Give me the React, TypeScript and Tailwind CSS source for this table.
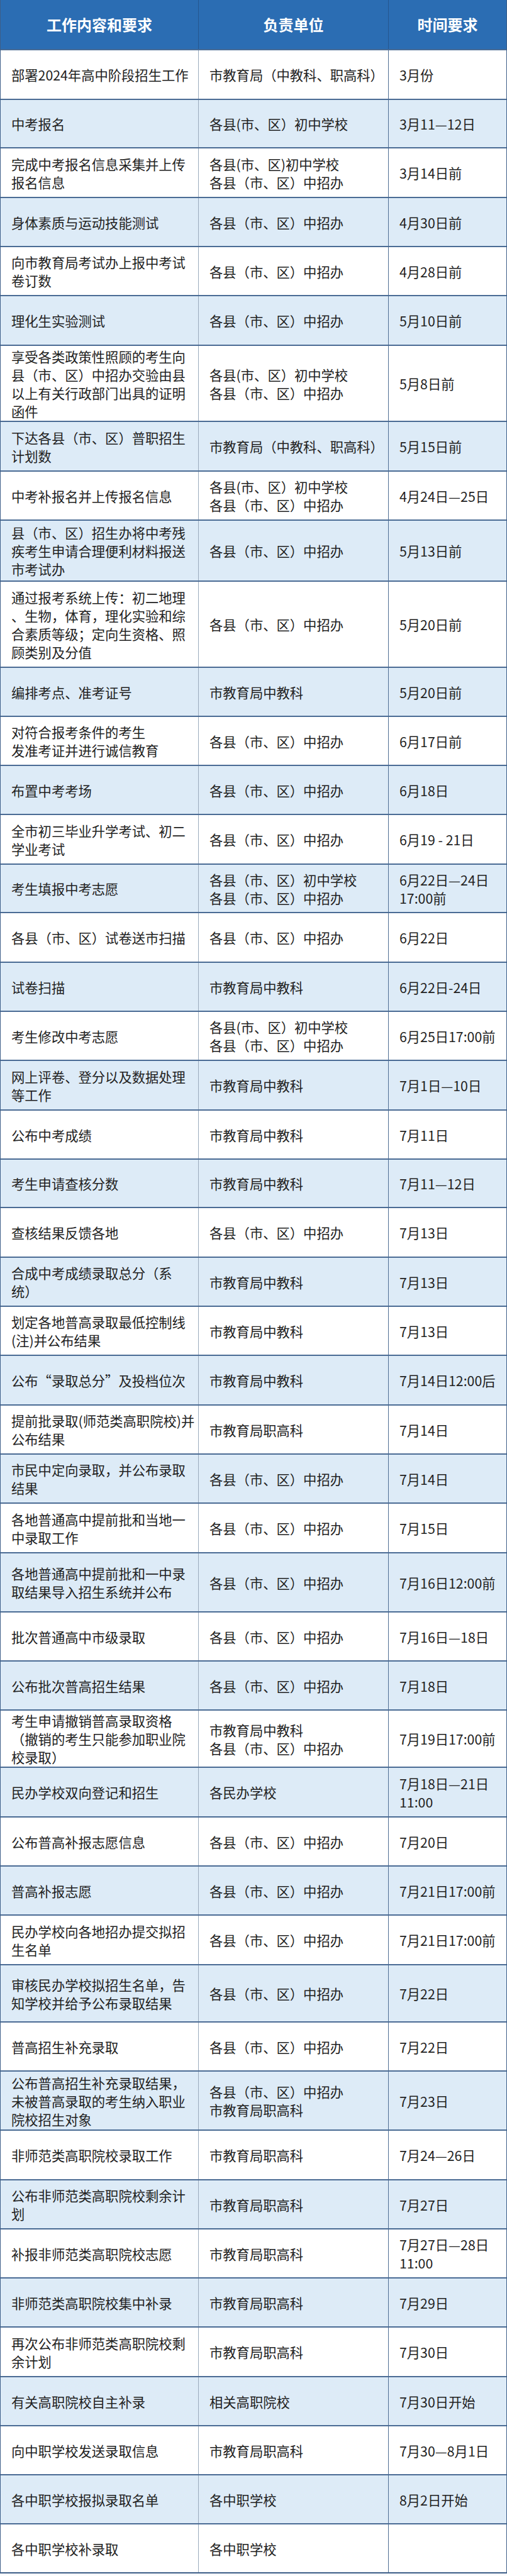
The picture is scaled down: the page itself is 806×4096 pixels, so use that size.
type Row = {
  task: string[];
  unit: string[];
  time: string[];
  h: string;
};

const A = "各县（市、区）中招办";
const B = "各县(市、区）初中学校";
const ZJ = "市教育局中教科";
const ZG = "市教育局职高科";
const BOTH = "市教育局（中教科、职高科）";

const rows: Row[] = [
  { task: ["部署2024年高中阶段招生工作"], unit: [BOTH], time: ["3月份"], h: "h-[79px]" },
  { task: ["中考报名"], unit: [B], time: ["3月11—12日"], h: "h-[77px]" },
  { task: ["完成中考报名信息采集并上传", "报名信息"], unit: ["各县(市、区)初中学校", A], time: ["3月14日前"], h: "h-[79px]" },
  { task: ["身体素质与运动技能测试"], unit: [A], time: ["4月30日前"], h: "h-[78px]" },
  { task: ["向市教育局考试办上报中考试", "卷订数"], unit: [A], time: ["4月28日前"], h: "h-[78px]" },
  { task: ["理化生实验测试"], unit: [A], time: ["5月10日前"], h: "h-[79px]" },
  {
    task: ["享受各类政策性照顾的考生向", "县（市、区）中招办交验由县", "以上有关行政部门出具的证明", "函件"],
    unit: [B, A],
    time: ["5月8日前"],
    h: "h-[121px]",
  },
  { task: ["下达各县（市、区）普职招生", "计划数"], unit: [BOTH], time: ["5月15日前"], h: "h-[79px]" },
  { task: ["中考补报名并上传报名信息"], unit: [B, A], time: ["4月24日—25日"], h: "h-[78px]" },
  {
    task: ["县（市、区）招生办将中考残", "疾考生申请合理便利材料报送", "市考试办"],
    unit: [A],
    time: ["5月13日前"],
    h: "h-[97px]",
  },
  {
    task: ["通过报考系统上传：初二地理", "、生物，体育，理化实验和综", "合素质等级；定向生资格、照", "顾类别及分值"],
    unit: [A],
    time: ["5月20日前"],
    h: "h-[137px]",
  },
  { task: ["编排考点、准考证号"], unit: [ZJ], time: ["5月20日前"], h: "h-[78px]" },
  { task: ["对符合报考条件的考生", "发准考证并进行诚信教育"], unit: [A], time: ["6月17日前"], h: "h-[78px]" },
  { task: ["布置中考考场"], unit: [A], time: ["6月18日"], h: "h-[78px]" },
  { task: ["全市初三毕业升学考试、初二", "学业考试"], unit: [A], time: ["6月19 - 21日"], h: "h-[79px]" },
  { task: ["考生填报中考志愿"], unit: ["各县（市、区）初中学校", A], time: ["6月22日—24日", "17:00前"], h: "h-[77px]" },
  { task: ["各县（市、区）试卷送市扫描"], unit: [A], time: ["6月22日"], h: "h-[79px]" },
  { task: ["试卷扫描"], unit: [ZJ], time: ["6月22日-24日"], h: "h-[78px]" },
  { task: ["考生修改中考志愿"], unit: [B, A], time: ["6月25日17:00前"], h: "h-[78px]" },
  { task: ["网上评卷、登分以及数据处理", "等工作"], unit: [ZJ], time: ["7月1日—10日"], h: "h-[79px]" },
  { task: ["公布中考成绩"], unit: [ZJ], time: ["7月11日"], h: "h-[78px]" },
  { task: ["考生申请查核分数"], unit: [ZJ], time: ["7月11—12日"], h: "h-[77px]" },
  { task: ["查核结果反馈各地"], unit: [A], time: ["7月13日"], h: "h-[79px]" },
  { task: ["合成中考成绩录取总分（系", "统）"], unit: [ZJ], time: ["7月13日"], h: "h-[78px]" },
  { task: ["划定各地普高录取最低控制线", "(注)并公布结果"], unit: [ZJ], time: ["7月13日"], h: "h-[78px]" },
  { task: ["公布“录取总分”及投档位次"], unit: [ZJ], time: ["7月14日12:00后"], h: "h-[79px]" },
  { task: ["提前批录取(师范类高职院校)并", "公布结果"], unit: [ZG], time: ["7月14日"], h: "h-[78px]" },
  { task: ["市民中定向录取，并公布录取", "结果"], unit: [A], time: ["7月14日"], h: "h-[78px]" },
  { task: ["各地普通高中提前批和当地一", "中录取工作"], unit: [A], time: ["7月15日"], h: "h-[79px]" },
  { task: ["各地普通高中提前批和一中录", "取结果导入招生系统并公布"], unit: [A], time: ["7月16日12:00前"], h: "h-[94px]" },
  { task: ["批次普通高中市级录取"], unit: [A], time: ["7月16日—18日"], h: "h-[78px]" },
  { task: ["公布批次普高招生结果"], unit: [A], time: ["7月18日"], h: "h-[78px]" },
  {
    task: ["考生申请撤销普高录取资格", "（撤销的考生只能参加职业院", "校录取）"],
    unit: [ZJ, A],
    time: ["7月19日17:00前"],
    h: "h-[91px]",
  },
  { task: ["民办学校双向登记和招生"], unit: ["各民办学校"], time: ["7月18日—21日", "11:00"], h: "h-[79px]" },
  { task: ["公布普高补报志愿信息"], unit: [A], time: ["7月20日"], h: "h-[78px]" },
  { task: ["普高补报志愿"], unit: [A], time: ["7月21日17:00前"], h: "h-[78px]" },
  { task: ["民办学校向各地招办提交拟招", "生名单"], unit: [A], time: ["7月21日17:00前"], h: "h-[79px]" },
  { task: ["审核民办学校拟招生名单，告", "知学校并给予公布录取结果"], unit: [A], time: ["7月22日"], h: "h-[91px]" },
  { task: ["普高招生补充录取"], unit: [A], time: ["7月22日"], h: "h-[78px]" },
  {
    task: ["公布普高招生补充录取结果，", "未被普高录取的考生纳入职业", "院校招生对象"],
    unit: [A, ZG],
    time: ["7月23日"],
    h: "h-[94px]",
  },
  { task: ["非师范类高职院校录取工作"], unit: [ZG], time: ["7月24—26日"], h: "h-[79px]" },
  { task: ["公布非师范类高职院校剩余计", "划"], unit: [ZG], time: ["7月27日"], h: "h-[78px]" },
  { task: ["补报非师范类高职院校志愿"], unit: [ZG], time: ["7月27日—28日", "11:00"], h: "h-[78px]" },
  { task: ["非师范类高职院校集中补录"], unit: [ZG], time: ["7月29日"], h: "h-[78px]" },
  { task: ["再次公布非师范类高职院校剩", "余计划"], unit: [ZG], time: ["7月30日"], h: "h-[79px]" },
  { task: ["有关高职院校自主补录"], unit: ["相关高职院校"], time: ["7月30日开始"], h: "h-[78px]" },
  { task: ["向中职学校发送录取信息"], unit: [ZG], time: ["7月30—8月1日"], h: "h-[78px]" },
  { task: ["各中职学校报拟录取名单"], unit: ["各中职学校"], time: ["8月2日开始"], h: "h-[78px]" },
  { task: ["各中职学校补录取"], unit: ["各中职学校"], time: [], h: "h-[78px]" },
];

function Lines({ lines }: { lines: string[] }) {
  return (
    <>
      {lines.map((l, i) => (
        <span key={i} className="block whitespace-nowrap">
          {l}
        </span>
      ))}
    </>
  );
}

export default function App() {
  return (
    <div className="w-[806px] bg-white font-['Noto_Sans_CJK_SC','Liberation_Sans',sans-serif]">
      <div className="border-x border-b-2 border-[#3d5e88]">
        {/* header */}
        <div className="grid h-[78px] grid-cols-[315px_302px_187px] bg-[#2b6db3] text-[24px] font-bold text-white">
          <div className="flex items-center justify-center border-r border-[#24568f]">
            工作内容和要求
          </div>
          <div className="flex items-center justify-center border-r border-[#24568f]">
            负责单位
          </div>
          <div className="flex items-center justify-center">时间要求</div>
        </div>

        {rows.map((r, i) => (
          <div
            key={i}
            className={`grid grid-cols-[315px_302px_187px] border-t-2 border-[#4a6b94] text-[21.3px] leading-[29px] text-[#222] ${r.h} ${
              i % 2 === 1 ? "bg-[#ddebf7]" : "bg-white"
            }`}
          >
            <div className="flex flex-col justify-center border-r border-[#9aaabd] pl-[17px]">
              <Lines lines={r.task} />
            </div>
            <div className="flex flex-col justify-center border-r border-[#4f6e94] pl-[17px]">
              <Lines lines={r.unit} />
            </div>
            <div className="flex flex-col justify-center pl-[17px]">
              <Lines lines={r.time} />
            </div>
          </div>
        ))}
      </div>
    </div>
  );
}
